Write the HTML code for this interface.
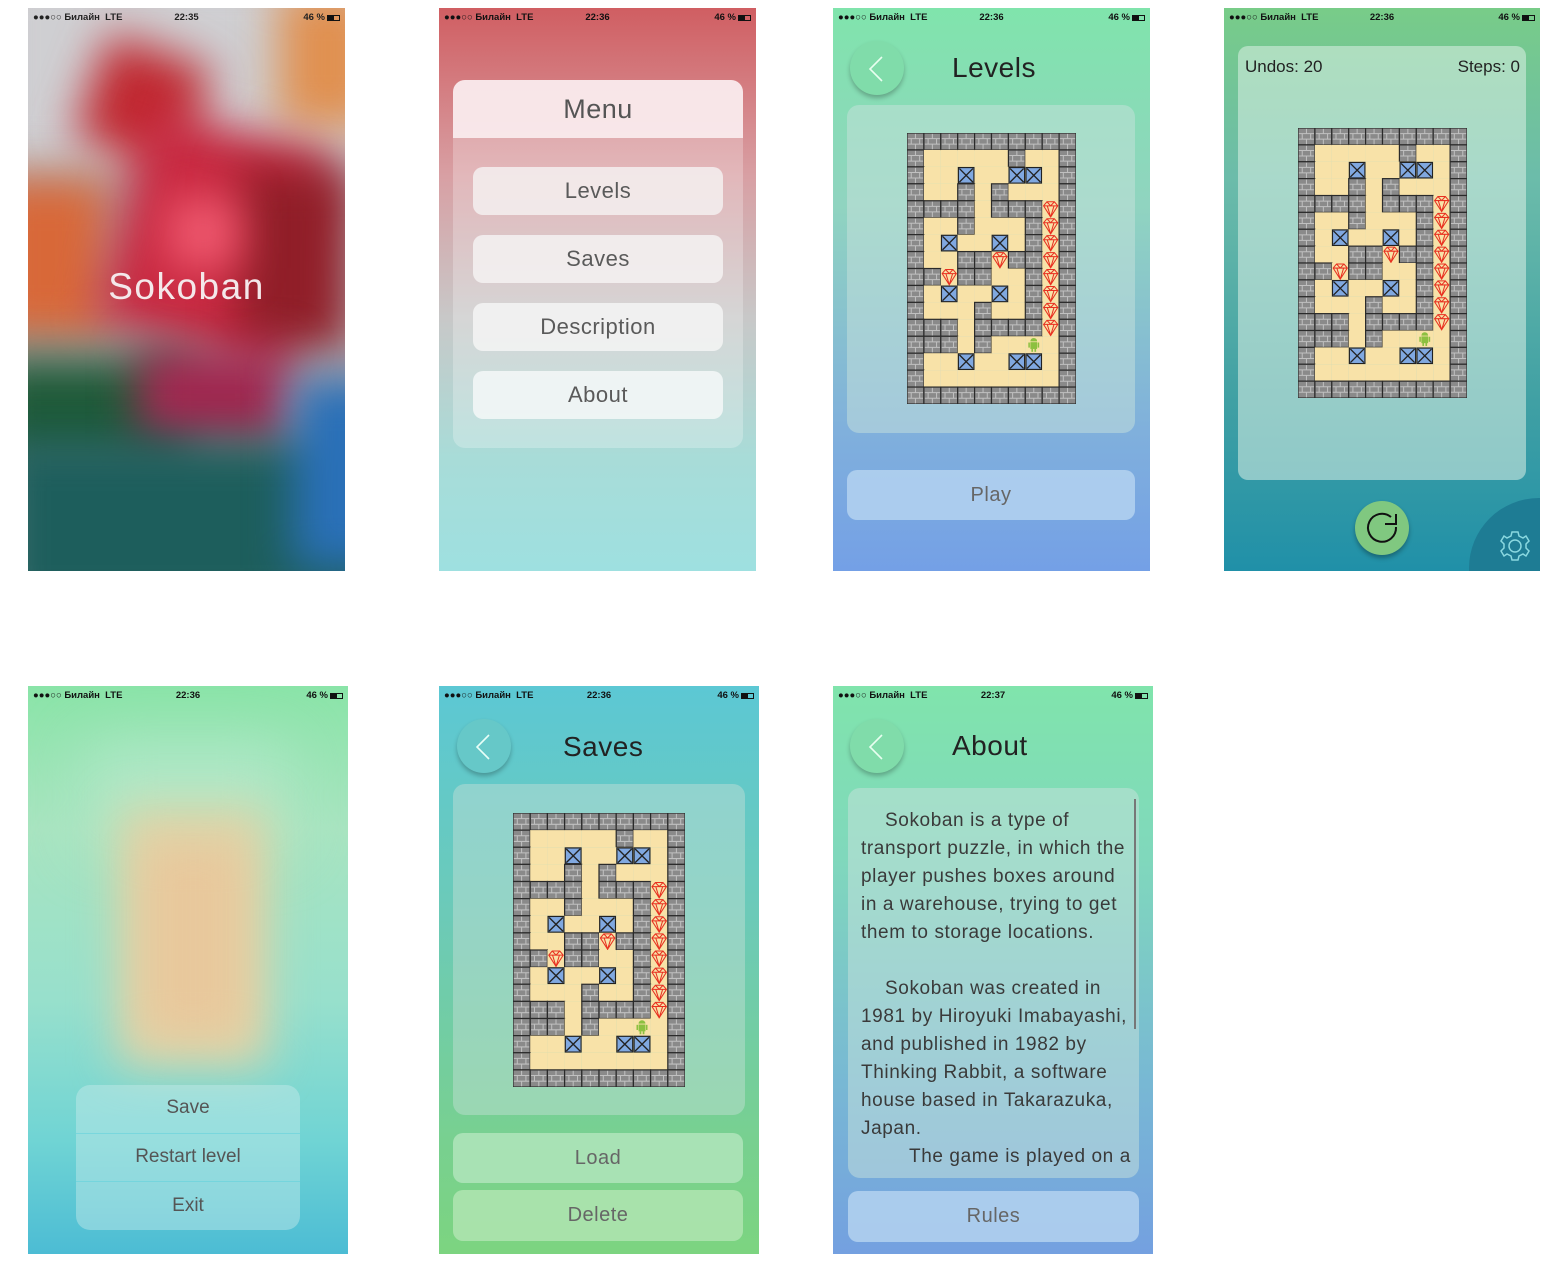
<!DOCTYPE html>
<html><head><meta charset="utf-8">
<style>
*{margin:0;padding:0;box-sizing:border-box}
body{width:1564px;height:1284px;background:#fff;position:relative;overflow:hidden;font-family:"Liberation Sans","DejaVu Sans",sans-serif}
.scr{position:absolute;overflow:hidden}
.sb{position:absolute;left:0;right:0;top:0;height:18px;font-size:9.5px;color:#111;font-weight:bold}
.sb .l{position:absolute;left:5px;top:4px;letter-spacing:0}
.sb .c{position:absolute;left:0;right:0;text-align:center;top:4px}
.sb .r{position:absolute;right:5px;top:4px}
.bat{display:inline-block;width:13px;height:6px;border:1px solid #111;vertical-align:-1px;position:relative;margin-left:2px}
.bat:before{content:"";position:absolute;left:0;top:0;bottom:0;width:6px;background:#111}
.abs{position:absolute}
.btn{position:absolute;border-radius:10px;text-align:center;color:#5a5a5a;font-size:22px;letter-spacing:.5px}
.back{position:absolute;width:54px;height:54px;border-radius:50%;box-shadow:0 3px 5px rgba(0,0,0,.25);}
.back svg{position:absolute;left:0;top:0}
.title{position:absolute;font-size:28px;color:#222;letter-spacing:.5px}
.blob{position:absolute;filter:blur(22px)}
.about{position:absolute;left:861px;font-size:19px;color:#3a3a3a;white-space:nowrap;letter-spacing:.6px}
</style></head><body>

<!-- Screen 1 -->
<div class="scr" style="left:28px;top:8px;width:317px;height:563px;background:#b0a8ac">
 <div class="blob" style="left:-40px;top:-40px;width:400px;height:200px;background:#cfcfd2"></div>
 <div class="blob" style="left:250px;top:-20px;width:100px;height:140px;background:#e09050"></div>
 <div class="blob" style="left:60px;top:40px;width:110px;height:110px;background:#c02830;transform:rotate(20deg)"></div>
 <div class="blob" style="left:-40px;top:170px;width:120px;height:160px;background:#d86838"></div>
 <div class="blob" style="left:90px;top:120px;width:190px;height:220px;background:#c82840;transform:rotate(15deg)"></div>
 <div class="blob" style="left:210px;top:160px;width:110px;height:180px;background:#901e28"></div>
 <div class="blob" style="left:140px;top:190px;width:70px;height:70px;background:#f05a70"></div>
 <div class="blob" style="left:-40px;top:350px;width:200px;height:110px;background:#1e5a38"></div>
 <div class="blob" style="left:110px;top:340px;width:150px;height:100px;background:#a02850"></div>
 <div class="blob" style="left:-30px;top:430px;width:400px;height:180px;background:#1d5e5c"></div>
 <div class="blob" style="left:265px;top:370px;width:100px;height:190px;background:#2a70b8"></div>
 <div class="sb" style="color:#222"><span class="l">●●●○○ Билайн &nbsp;LTE</span><span class="c">22:35</span><span class="r">46 %<span class="bat"></span></span></div>
 <div class="abs" style="left:0;right:0;top:258px;text-align:center;color:#f4e8ea;font-size:37px;letter-spacing:1.5px">Sokoban</div>
</div>

<!-- Screen 2 -->
<div class="scr" style="left:439px;top:8px;width:317px;height:563px;background:linear-gradient(#d05e62 0%,#d8a0a4 30%,#c8c8c8 55%,#a8dcd8 80%,#9ee0e0 100%)">
 <div class="sb"><span class="l">●●●○○ Билайн &nbsp;LTE</span><span class="c">22:36</span><span class="r">46 %<span class="bat"></span></span></div>
 <div class="abs" style="left:14px;top:72px;width:290px;height:368px;border-radius:12px;background:rgba(255,255,255,.25)"></div>
 <div class="abs" style="left:14px;top:72px;width:290px;height:58px;border-radius:12px 12px 0 0;background:rgba(250,236,238,.92);text-align:center;font-size:27px;color:#555;line-height:58px;letter-spacing:.5px">Menu</div>
 <div class="btn" style="left:34px;top:159px;width:250px;height:48px;line-height:48px;background:rgba(245,240,240,.85)">Levels</div>
 <div class="btn" style="left:34px;top:227px;width:250px;height:48px;line-height:48px;background:rgba(245,242,242,.85)">Saves</div>
 <div class="btn" style="left:34px;top:295px;width:250px;height:48px;line-height:48px;background:rgba(245,245,245,.85)">Description</div>
 <div class="btn" style="left:34px;top:363px;width:250px;height:48px;line-height:48px;background:rgba(245,248,248,.85)">About</div>
</div>

<!-- Screen 3 -->
<div class="scr" style="left:833px;top:8px;width:317px;height:563px;background:linear-gradient(#80e4ac 0%,#90d4c0 35%,#80b0dc 75%,#74a0e6 100%)">
 <div class="sb"><span class="l">●●●○○ Билайн &nbsp;LTE</span><span class="c">22:36</span><span class="r">46 %<span class="bat"></span></span></div>
 <div class="back" style="left:17px;top:33px;background:#80dcaa"><svg width="54" height="54"><path d="M32 16 L20 28 L32 40" stroke="#e8fff0" stroke-width="1.6" fill="none"/></svg></div>
 <div class="title" style="left:119px;top:44px">Levels</div>
 <div class="abs" style="left:14px;top:97px;width:288px;height:328px;border-radius:12px;background:rgba(200,225,220,.5)"></div>
 <div class="map abs" style="left:74px;top:125px;width:169px;height:271px"></div>
 <div class="btn" style="left:14px;top:462px;width:288px;height:50px;line-height:50px;background:rgba(180,210,240,.85);font-size:20px;color:#666">Play</div>
</div>

<!-- Screen 4 -->
<div class="scr" style="left:1224px;top:8px;width:316px;height:563px;background:linear-gradient(#78cc88 0%,#6cbcaa 30%,#40a0a4 70%,#2090a8 100%)">
 <div class="sb"><span class="l">●●●○○ Билайн &nbsp;LTE</span><span class="c">22:36</span><span class="r">46 %<span class="bat"></span></span></div>
 <div class="abs" style="left:14px;top:38px;width:288px;height:434px;border-radius:10px;background:rgba(220,240,230,.55)"></div>
 <div class="abs" style="left:21px;top:49px;font-size:17px;color:#222">Undos: 20</div>
 <div class="abs" style="right:20px;top:49px;font-size:17px;color:#222">Steps: 0</div>
 <div class="map abs" style="left:74px;top:120px;width:169px;height:270px"></div>
 <div class="abs" style="left:131px;top:493px;width:54px;height:54px;border-radius:50%;background:#80c880;box-shadow:0 3px 5px rgba(0,0,0,.3)">
  <svg width="54" height="54"><path d="M41 26 A14 14 0 1 1 36 16" stroke="#111" stroke-width="2" fill="none"/><path d="M30 23 L41 23 L41 13" stroke="#111" stroke-width="2" fill="none"/></svg>
 </div>
 <div class="abs" style="left:245px;top:490px;width:140px;height:140px;border-radius:50%;background:#1e7c94"></div>
 <svg class="abs" style="left:274px;top:521px" width="34" height="34" viewBox="-17 -17 34 34"><g stroke="#8ad8e0" stroke-width="1.5" fill="none"><circle r="6"/><path d="M-3 -14 L3 -14 L4 -10 L8 -8 L11 -10 L14 -5 L11 -2 L11 2 L14 5 L11 10 L8 8 L4 10 L3 14 L-3 14 L-4 10 L-8 8 L-11 10 L-14 5 L-11 2 L-11 -2 L-14 -5 L-11 -10 L-8 -8 L-4 -10 Z"/></g></svg>
</div>

<!-- Screen 5 -->
<div class="scr" style="left:28px;top:686px;width:320px;height:568px;background:linear-gradient(#8ae4a8 0%,#a8e4c0 25%,#98e0cc 55%,#70d4d4 80%,#4cbcd4 100%)">
 <div class="blob" style="left:60px;top:60px;width:200px;height:100px;background:#b0e8c8;filter:blur(30px)"></div>
 <div class="blob" style="left:90px;top:120px;width:150px;height:260px;background:#e0d4a8;filter:blur(22px)"></div>
 <div class="blob" style="left:115px;top:160px;width:100px;height:190px;background:#e8c89c;filter:blur(20px)"></div>
 <div class="sb"><span class="l">●●●○○ Билайн &nbsp;LTE</span><span class="c">22:36</span><span class="r">46 %<span class="bat"></span></span></div>
 <div class="abs" style="left:48px;top:399px;width:224px;height:145px;border-radius:14px;background:rgba(200,235,235,.45)"></div>
 <div class="abs" style="left:48px;top:447px;width:224px;height:1px;background:rgba(100,210,220,.6)"></div>
 <div class="abs" style="left:48px;top:495px;width:224px;height:1px;background:rgba(100,210,220,.6)"></div>
 <div class="abs" style="left:48px;top:411px;width:224px;text-align:center;font-size:19px;color:#555">Save</div>
 <div class="abs" style="left:48px;top:460px;width:224px;text-align:center;font-size:19px;color:#555">Restart level</div>
 <div class="abs" style="left:48px;top:509px;width:224px;text-align:center;font-size:19px;color:#555">Exit</div>
</div>

<!-- Screen 6 -->
<div class="scr" style="left:439px;top:686px;width:320px;height:568px;background:linear-gradient(#5cc8d4 0%,#6ccab8 40%,#78d090 80%,#7cd480 100%)">
 <div class="sb"><span class="l">●●●○○ Билайн &nbsp;LTE</span><span class="c">22:36</span><span class="r">46 %<span class="bat"></span></span></div>
 <div class="back" style="left:18px;top:33px;background:#66c8c8"><svg width="54" height="54"><path d="M32 16 L20 28 L32 40" stroke="#e8fff8" stroke-width="1.6" fill="none"/></svg></div>
 <div class="title" style="left:124px;top:45px">Saves</div>
 <div class="abs" style="left:14px;top:98px;width:292px;height:331px;border-radius:12px;background:rgba(200,225,215,.45)"></div>
 <div class="map abs" style="left:74px;top:127px;width:172px;height:274px"></div>
 <div class="btn" style="left:14px;top:447px;width:290px;height:50px;line-height:50px;background:rgba(180,230,190,.8);font-size:20px;color:#666">Load</div>
 <div class="btn" style="left:14px;top:504px;width:290px;height:51px;line-height:51px;background:rgba(180,230,180,.8);font-size:20px;color:#666">Delete</div>
</div>

<!-- Screen 7 -->
<div class="scr" style="left:833px;top:686px;width:320px;height:568px;background:linear-gradient(#80e4ac 0%,#80d8bc 30%,#78b8d4 70%,#74a0e0 100%)">
 <div class="sb"><span class="l">●●●○○ Билайн &nbsp;LTE</span><span class="c">22:37</span><span class="r">46 %<span class="bat"></span></span></div>
 <div class="back" style="left:17px;top:33px;background:#80dcaa"><svg width="54" height="54"><path d="M32 16 L20 28 L32 40" stroke="#e8fff0" stroke-width="1.6" fill="none"/></svg></div>
 <div class="title" style="left:119px;top:44px">About</div>
 <div class="abs" style="left:15px;top:102px;width:291px;height:390px;border-radius:12px;background:rgba(200,225,220,.5)"></div>
 <div class="abs" style="left:301px;top:113px;width:2px;height:230px;background:#777"></div>
 <div class="btn" style="left:15px;top:505px;width:291px;height:51px;line-height:51px;background:rgba(180,210,240,.85);font-size:20px;color:#666">Rules</div>
</div>
<div class="about" style="left:885px;top:810px">Sokoban is a type of</div>
<div class="about" style="top:838px">transport puzzle, in which the</div>
<div class="about" style="top:866px">player pushes boxes around</div>
<div class="about" style="top:894px">in a warehouse, trying to get</div>
<div class="about" style="top:922px">them to storage locations.</div>
<div class="about" style="left:885px;top:978px">Sokoban was created in</div>
<div class="about" style="top:1006px">1981 by Hiroyuki Imabayashi,</div>
<div class="about" style="top:1034px">and published in 1982 by</div>
<div class="about" style="top:1062px">Thinking Rabbit, a software</div>
<div class="about" style="top:1090px">house based in Takarazuka,</div>
<div class="about" style="top:1118px">Japan.</div>
<div class="about" style="left:909px;top:1146px">The game is played on a</div>

<script>
var M=["WWWWWWWWWW","W.....W..W","W..B..BB.W","W..W.W...W","WWWW.WWWGW","W..W...WGW","W.B..B.WGW","W..WWGWWGW","WWGWW..WGW","W.B..B.WGW","W...W..WGW","WWW.WWWWGW","WWW.W..P.W","W..B..BB.W","W........W","WWWWWWWWWW"];
function tile(c,x,y){
 var s='<rect x="'+x+'" y="'+y+'" width="10" height="10" fill="#f8e2a8"/>';
 if(c=='W'){s='<rect x="'+x+'" y="'+y+'" width="10" height="10" fill="#8a8a8a" stroke="#2a2a2a" stroke-width=".7"/>'+
  '<path d="M'+(x+.5)+' '+(y+3.3)+'h9M'+(x+.5)+' '+(y+6.6)+'h9M'+(x+5)+' '+(y+.5)+'v2.8M'+(x+2.5)+' '+(y+3.3)+'v3.3M'+(x+7.5)+' '+(y+3.3)+'v3.3M'+(x+5)+' '+(y+6.6)+'v3" stroke="#c0c0c0" stroke-width=".6"/>';}
 else if(c=='B'){s+='<rect x="'+(x+.4)+'" y="'+(y+.4)+'" width="9.2" height="9.2" fill="#80a8e0" stroke="#222" stroke-width=".7"/><path d="M'+(x+1)+' '+(y+1)+'L'+(x+9)+' '+(y+9)+'M'+(x+9)+' '+(y+1)+'L'+(x+1)+' '+(y+9)+'" stroke="#222" stroke-width=".8"/>';}
 else if(c=='G'){s+='<path d="M'+(x+.8)+' '+(y+3)+'L'+(x+2.8)+' '+(y+.6)+'H'+(x+7.2)+'L'+(x+9.2)+' '+(y+3)+'L'+(x+5)+' '+(y+9.6)+'ZM'+(x+.8)+' '+(y+3)+'H'+(x+9.2)+'M'+(x+3)+' '+(y+3)+'L'+(x+5)+' '+(y+9.6)+'L'+(x+7)+' '+(y+3)+'M'+(x+2.8)+' '+(y+.6)+'L'+(x+5)+' '+(y+3)+'L'+(x+7.2)+' '+(y+.6)+'" fill="none" stroke="#e83020" stroke-width=".6"/>';}
 else if(c=='P'){s+='<rect x="'+(x+3)+'" y="'+(y+3.5)+'" width="4" height="4" fill="#8cc040"/><path d="M'+(x+3)+' '+(y+3)+'a2 2 0 0 1 4 0z" fill="#8cc040"/><rect x="'+(x+1.8)+'" y="'+(y+3.7)+'" width=".9" height="3" fill="#8cc040"/><rect x="'+(x+7.3)+'" y="'+(y+3.7)+'" width=".9" height="3" fill="#8cc040"/><rect x="'+(x+3.6)+'" y="'+(y+7.4)+'" width="1" height="1.8" fill="#8cc040"/><rect x="'+(x+5.4)+'" y="'+(y+7.4)+'" width="1" height="1.8" fill="#8cc040"/>';}
 return s;}
var svg='';for(var r=0;r<16;r++)for(var c=0;c<10;c++)svg+=tile(M[r][c],c*10,r*10);
document.querySelectorAll('.map').forEach(function(e){e.innerHTML='<svg width="100%" height="100%" viewBox="0 0 100 160" preserveAspectRatio="none">'+svg+'</svg>';});
</script>
</body></html>
